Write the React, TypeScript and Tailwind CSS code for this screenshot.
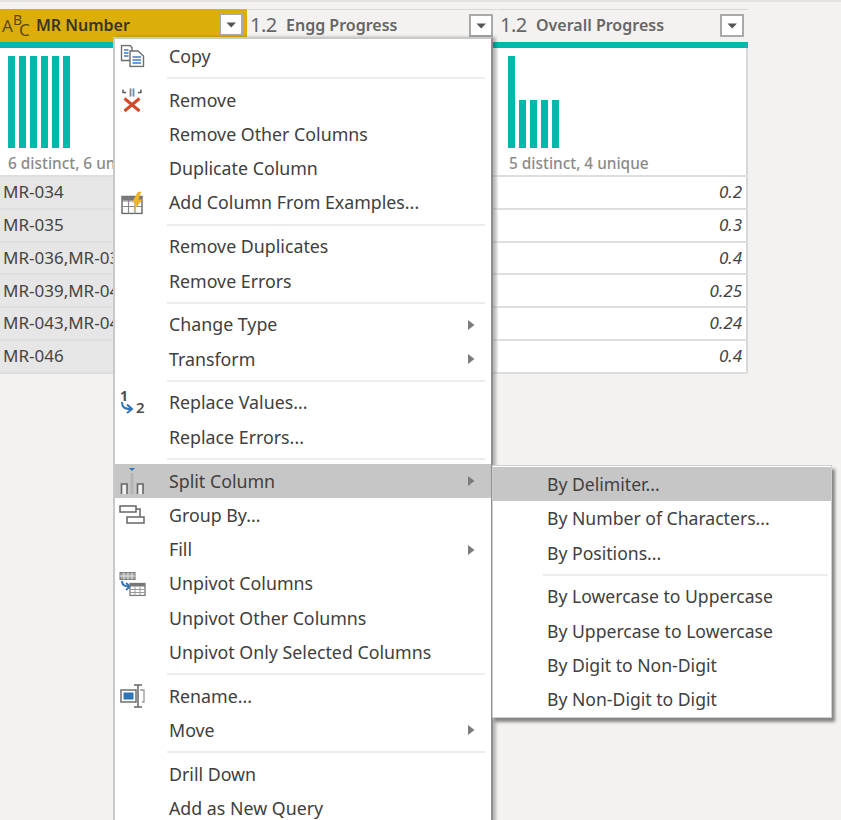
import React from 'react';

const TEAL = 'bg-[#01b8aa]';

const Chevron = () => (
  <svg width="9" height="13" viewBox="0 0 9 13" className="absolute left-[352px] top-1/2 -translate-y-1/2">
    <path d="M1 1.5 L7.5 6.5 L1 11.5 Z" fill="#7c7c7c" />
  </svg>
);

const HeaderCaret = () => (
  <div className="absolute top-[4px] right-[4px] w-[24px] h-[23px] bg-white border-2 border-[#a9a9a9] flex items-center justify-center">
    <svg width="11" height="6" viewBox="0 0 11 6">
      <path d="M0.5 0.5 H10 L5.2 5.5 Z" fill="#555" />
    </svg>
  </div>
);

const CopyIcon = () => (
  <svg width="25" height="23" viewBox="0 0 25 23" fill="none">
    <path d="M1.5 1H10L12 3V16H1.5Z" fill="#fff" stroke="#6d6d6d" strokeWidth="1.4" />
    <path d="M4 5.5H8.5M4 8.5H8.5M4 11.5H8.5" stroke="#3f7cbf" strokeWidth="1.3" />
    <path d="M10 6.5H18L23.5 11.5V22H10Z" fill="#fff" stroke="#6d6d6d" strokeWidth="1.4" />
    <path d="M12.5 12.5H21M12.5 15.5H21M12.5 18.5H21" stroke="#3f7cbf" strokeWidth="1.3" />
  </svg>
);

const RemoveIcon = () => (
  <svg width="20" height="25" viewBox="0 0 20 25" fill="none">
    <path d="M1 2V5H4M19 2V5H16" stroke="#555" strokeWidth="1.4" />
    <rect x="7" y="1" width="6" height="8" fill="#b9cfe6" />
    <path d="M8.5 1V9M11.5 1V9" stroke="#8a8a8a" strokeWidth="1" />
    <path d="M2.5 11L17.5 23.5M17.5 11L2.5 23.5" stroke="#d4492a" strokeWidth="3" />
  </svg>
);

const ExamplesIcon = () => (
  <svg width="22" height="23" viewBox="0 0 22 23" fill="none">
    <rect x="1" y="5" width="20" height="17" fill="#fff" stroke="#666" strokeWidth="1.4" />
    <path d="M1 9.5H21M1 15H21M7.5 5V22M14 5V22" stroke="#888" strokeWidth="1.2" />
    <rect x="1" y="5" width="20" height="4" fill="#7a7a7a" />
    <path d="M17 0L11 11H15L12 20L21.5 8H17.5L20.5 0Z" fill="#eeb42c" />
  </svg>
);

const ReplaceIcon = () => (
  <div className="relative w-[28px] h-[28px] text-[#4c4c4c] font-bold">
    <span className="absolute left-[2px] -top-[2px] text-[14px] leading-[18px]">1</span>
    <svg width="16" height="16" viewBox="0 0 16 16" fill="none" className="absolute left-[1px] top-[12px]">
      <path d="M3 1C3 6 5 8 12 8" stroke="#2f74b8" strokeWidth="2" />
      <path d="M8 3.5L13 8L8 12" stroke="#2f74b8" strokeWidth="2" />
    </svg>
    <span className="absolute left-[18px] top-[9px] text-[15px] leading-[18px] font-semibold">2</span>
  </div>
);

const SplitIcon = () => (
  <svg width="26" height="28" viewBox="0 0 26 28" fill="none">
    <path d="M10 1H16L13 4Z" fill="#2f74b8" />
    <path d="M13 6V27" stroke="#b5b5b5" strokeWidth="3" />
    <path d="M2.5 27V17H8V27M18.5 27V17H24V27" stroke="#666" strokeWidth="1.6" fill="#f0f0f0" />
  </svg>
);

const GroupIcon = () => (
  <svg width="26" height="20" viewBox="0 0 26 20" fill="none">
    <rect x="1" y="1" width="16" height="6" fill="#fff" stroke="#666" strokeWidth="1.5" />
    <rect x="8" y="12" width="17" height="6" fill="#fff" stroke="#666" strokeWidth="1.5" />
    <path d="M17 4H21V12" stroke="#666" strokeWidth="1.5" />
  </svg>
);

const UnpivotIcon = () => (
  <svg width="27" height="25" viewBox="0 0 27 25" fill="none">
    <rect x="1" y="1" width="15" height="7" fill="#a3a3a3" stroke="#777" />
    <path d="M5 1V8M9 1V8M13 1V8M1 4.5H16" stroke="#eee" strokeWidth="0.9" />
    <path d="M3 9.5C3 13 5 15 10 15" stroke="#2f74b8" strokeWidth="2" />
    <path d="M7 11.5L11 15L7 18.5" stroke="#2f74b8" strokeWidth="1.8" />
    <rect x="11" y="12" width="15" height="12" fill="#fff" stroke="#777" strokeWidth="1.3" />
    <rect x="11" y="12" width="15" height="3" fill="#777" />
    <path d="M11 18H26M11 21H26M16 15V24M21 15V24" stroke="#999" />
  </svg>
);

const RenameIcon = () => (
  <svg width="25" height="24" viewBox="0 0 25 24" fill="none">
    <rect x="1" y="6" width="15" height="12" fill="#fff" stroke="#777" strokeWidth="1.6" />
    <rect x="3.5" y="8.5" width="10" height="7" fill="#2f74b8" />
    <path d="M20 6H24V18H22" stroke="#999" strokeWidth="1.3" />
    <path d="M14 1H18V23H14M22 1H18M22 23H18" stroke="#666" strokeWidth="1.5" />
  </svg>
);

type Item = { label: string; icon?: React.ReactNode; arrow?: boolean; active?: boolean } | 'sep';

const ITEMS: Item[] = [
  { label: 'Copy', icon: <CopyIcon /> },
  'sep',
  { label: 'Remove', icon: <RemoveIcon /> },
  { label: 'Remove Other Columns' },
  { label: 'Duplicate Column' },
  { label: 'Add Column From Examples...', icon: <ExamplesIcon /> },
  'sep',
  { label: 'Remove Duplicates' },
  { label: 'Remove Errors' },
  'sep',
  { label: 'Change Type', arrow: true },
  { label: 'Transform', arrow: true },
  'sep',
  { label: 'Replace Values...', icon: <ReplaceIcon /> },
  { label: 'Replace Errors...' },
  'sep',
  { label: 'Split Column', icon: <SplitIcon />, arrow: true, active: true },
  { label: 'Group By...', icon: <GroupIcon /> },
  { label: 'Fill', arrow: true },
  { label: 'Unpivot Columns', icon: <UnpivotIcon /> },
  { label: 'Unpivot Other Columns' },
  { label: 'Unpivot Only Selected Columns' },
  'sep',
  { label: 'Rename...', icon: <RenameIcon /> },
  { label: 'Move', arrow: true },
  'sep',
  { label: 'Drill Down' },
  { label: 'Add as New Query' },
];

const SUB: Item[] = [
  { label: 'By Delimiter...', active: true },
  { label: 'By Number of Characters...' },
  { label: 'By Positions...' },
  'sep',
  { label: 'By Lowercase to Uppercase' },
  { label: 'By Uppercase to Lowercase' },
  { label: 'By Digit to Non-Digit' },
  { label: 'By Non-Digit to Digit' },
];

const Row = ({ item }: { item: Exclude<Item, 'sep'> }) => (
  <div className={`relative h-[34.3px] shrink-0 flex items-center pl-[54px] ${item.active ? 'bg-[#c6c6c6]' : ''}`}>
    {item.icon && <div className="absolute left-[2px] top-1/2 -translate-y-1/2 w-[30px] flex justify-center">{item.icon}</div>}
    <span className="whitespace-nowrap">{item.label}</span>
    {item.arrow && <Chevron />}
  </div>
);

const Header = ({ label, type, active, className }: { label: string; type: React.ReactNode; active?: boolean; className: string }) => (
  <div className={`absolute top-[9px] h-[33px] flex items-center ${active ? 'bg-[#dcae0c]' : 'bg-[#f3f2f1] border-t border-[#d8d8d8]'} ${className}`}>
    {type}
    <span className={`text-[16px] font-semibold whitespace-nowrap -translate-y-[1px] ${active ? 'text-[#3a3520]' : 'text-[#666]'}`}>{label}</span>
    <HeaderCaret />
  </div>
);

const Decimal = () => <span className="text-[#666] text-[20px] w-[38px] pl-[2px] tracking-tight -translate-y-[1px]">1.2</span>;

const AbcType = () => (
  <span className="w-[36px] pl-[2px] text-[#5a4a10] text-[17px] leading-none whitespace-nowrap">
    A<span className="relative -top-[7px] text-[14px]">B</span>
    <span className="relative top-[4px] -ml-[3px] text-[17px]">C</span>
  </span>
);

const Bars = ({ heights, left }: { heights: number[]; left: number }) => (
  <div className="absolute top-[56px] h-[92px] flex items-end gap-[4.5px]" style={{ left }}>
    {heights.map((h, i) => (
      <div key={i} className={`w-[6.5px] ${TEAL}`} style={{ height: h }} />
    ))}
  </div>
);

const ROWS: [string, string][] = [
  ['MR-034', '0.2'],
  ['MR-035', '0.3'],
  ['MR-036,MR-037', '0.4'],
  ['MR-039,MR-040', '0.25'],
  ['MR-043,MR-044', '0.24'],
  ['MR-046', '0.4'],
];

export default function App() {
  return (
    <div className="relative w-[841px] h-[820px] overflow-hidden bg-[#f3f2f1] text-[#404040] font-['Open_Sans','Noto_Sans',sans-serif]">
      <div className="absolute inset-x-0 top-0 h-[2px] bg-[#e2e2e2]" />

      <Header active label="MR Number" className="left-0 w-[247px]" type={<AbcType />} />
      <Header label="Engg Progress" className="left-[248px] w-[249px]" type={<Decimal />} />
      <Header label="Overall Progress" className="left-[498px] w-[250px]" type={<Decimal />} />

      <div className={`absolute top-[42px] left-0 w-[748px] h-[6px] ${TEAL}`} />

      {/* profile + data area */}
      <div className="absolute top-[48px] left-0 w-[247px] h-[127px] bg-white" />
      <div className="absolute top-[48px] left-[498px] w-[250px] h-[127px] bg-white border-r-2 border-[#d8d8d8]" />
      <Bars heights={[92, 92, 92, 92, 92, 92]} left={8} />
      <Bars heights={[92, 48, 48, 48, 48]} left={508} />
      <span className="absolute left-[8px] top-[152px] text-[15.4px] font-medium text-[#8a8a8a] whitespace-nowrap">6 distinct, 6 unique</span>
      <span className="absolute left-[509px] top-[152px] text-[15.4px] font-medium text-[#8a8a8a] whitespace-nowrap">5 distinct, 4 unique</span>

      <div className="absolute top-[175px] left-0 w-[748px] flex flex-col">
        {ROWS.map(([mr, v]) => (
          <div key={mr} className="h-[32.8px] flex border-t-2 border-[#dedede] text-[17px]">
            <div className="w-[247px] bg-[#e6e6e6] pl-[3px] pb-[1px] flex items-center whitespace-nowrap text-[#444]">{mr}</div>
            <div className="w-[251px]" />
            <div className="w-[250px] bg-white border-r-2 border-[#d8d8d8] pr-[4px] pb-[1px] flex items-center justify-end italic text-[#444]">{v}</div>
          </div>
        ))}
        <div className="h-[2px] bg-[#dedede]" />
      </div>

      {/* column context menu */}
      <div className="absolute left-[113px] top-[37px] w-[380px] h-[790px] bg-white border-l-2 border-r-2 border-t-2 border-[#c9c9c9] border-r-[#8f8f8f] flex flex-col text-[17.8px] shadow-[3px_0_3px_rgba(0,0,0,0.25)]">
        {ITEMS.map((item, i) =>
          item === 'sep' ? (
            <div key={i} className="h-[9.5px] shrink-0 flex items-center pl-[52px] pr-[6px]">
              <div className="h-[2px] w-full bg-[#ededed]" />
            </div>
          ) : (
            <Row key={item.label} item={item} />
          )
        )}
      </div>

      {/* split column submenu */}
      <div className="absolute left-[492px] top-[465px] w-[340px] h-[253px] bg-white border border-[#d0d0d0] pt-[1px] flex flex-col text-[17.6px] shadow-[3px_4px_3px_rgba(0,0,0,0.45)]">
        {SUB.map((item, i) =>
          item === 'sep' ? (
            <div key={i} className="h-[9.5px] shrink-0 flex items-center pl-[50px] pr-[3px]">
              <div className="h-[2px] w-full bg-[#ededed]" />
            </div>
          ) : (
            <Row key={item.label} item={item} />
          )
        )}
      </div>
    </div>
  );
}
